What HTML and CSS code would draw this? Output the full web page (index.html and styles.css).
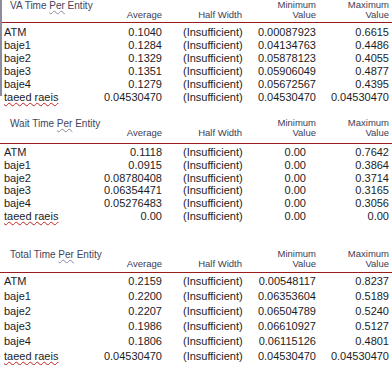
FILE: index.html
```html
<!DOCTYPE html>
<html>
<head>
<meta charset="utf-8">
<link rel="stylesheet" href="styles.css">
</head>
<body>
<section class="report report--va">
  <div class="head">
    <div class="title">VA Time <span class="sq">Per</span> Entity</div>
    <div class="h-avg">Average</div>
    <div class="h-hw">Half Width</div>
    <div class="h-min">Minimum<br>Value</div>
    <div class="h-max">Maximum<br>Value</div>
  </div>
  <div class="rows">
    <div class="row"><span class="lbl">ATM</span><span class="num">0.1040</span><span class="hw">(Insufficient)</span><span class="num">0.00087923</span><span class="num">0.6615</span></div>
    <div class="row"><span class="lbl">baje1</span><span class="num">0.1284</span><span class="hw">(Insufficient)</span><span class="num">0.04134763</span><span class="num">0.4486</span></div>
    <div class="row"><span class="lbl">baje2</span><span class="num">0.1329</span><span class="hw">(Insufficient)</span><span class="num">0.05878123</span><span class="num">0.4055</span></div>
    <div class="row"><span class="lbl">baje3</span><span class="num">0.1351</span><span class="hw">(Insufficient)</span><span class="num">0.05906049</span><span class="num">0.4877</span></div>
    <div class="row"><span class="lbl">baje4</span><span class="num">0.1279</span><span class="hw">(Insufficient)</span><span class="num">0.05672567</span><span class="num">0.4395</span></div>
    <div class="row"><span class="lbl"><span class="spell">taeed raeis</span></span><span class="num">0.04530470</span><span class="hw">(Insufficient)</span><span class="num">0.04530470</span><span class="num">0.04530470</span></div>
  </div>
</section>

<section class="report report--wait">
  <div class="head">
    <div class="title">Wait Time <span class="sq">Per</span> Entity</div>
    <div class="h-avg">Average</div>
    <div class="h-hw">Half Width</div>
    <div class="h-min">Minimum<br>Value</div>
    <div class="h-max">Maximum<br>Value</div>
  </div>
  <div class="rows">
    <div class="row"><span class="lbl">ATM</span><span class="num">0.1118</span><span class="hw">(Insufficient)</span><span class="num short">0.00</span><span class="num">0.7642</span></div>
    <div class="row"><span class="lbl">baje1</span><span class="num">0.0915</span><span class="hw">(Insufficient)</span><span class="num short">0.00</span><span class="num">0.3864</span></div>
    <div class="row"><span class="lbl">baje2</span><span class="num">0.08780408</span><span class="hw">(Insufficient)</span><span class="num short">0.00</span><span class="num">0.3714</span></div>
    <div class="row"><span class="lbl">baje3</span><span class="num">0.06354471</span><span class="hw">(Insufficient)</span><span class="num short">0.00</span><span class="num">0.3165</span></div>
    <div class="row"><span class="lbl">baje4</span><span class="num">0.05276483</span><span class="hw">(Insufficient)</span><span class="num short">0.00</span><span class="num">0.3056</span></div>
    <div class="row"><span class="lbl"><span class="spell">taeed raeis</span></span><span class="num">0.00</span><span class="hw">(Insufficient)</span><span class="num short">0.00</span><span class="num">0.00</span></div>
  </div>
</section>

<section class="report report--total">
  <div class="head">
    <div class="title">Total Time <span class="sq">Per</span> Entity</div>
    <div class="h-avg">Average</div>
    <div class="h-hw">Half Width</div>
    <div class="h-min">Minimum<br>Value</div>
    <div class="h-max">Maximum<br>Value</div>
  </div>
  <div class="rows">
    <div class="row"><span class="lbl">ATM</span><span class="num">0.2159</span><span class="hw">(Insufficient)</span><span class="num">0.00548117</span><span class="num">0.8237</span></div>
    <div class="row"><span class="lbl">baje1</span><span class="num">0.2200</span><span class="hw">(Insufficient)</span><span class="num">0.06353604</span><span class="num">0.5189</span></div>
    <div class="row"><span class="lbl">baje2</span><span class="num">0.2207</span><span class="hw">(Insufficient)</span><span class="num">0.06504789</span><span class="num">0.5240</span></div>
    <div class="row"><span class="lbl">baje3</span><span class="num">0.1986</span><span class="hw">(Insufficient)</span><span class="num">0.06610927</span><span class="num">0.5127</span></div>
    <div class="row"><span class="lbl">baje4</span><span class="num">0.1806</span><span class="hw">(Insufficient)</span><span class="num">0.06115126</span><span class="num">0.4801</span></div>
    <div class="row"><span class="lbl"><span class="spell">taeed raeis</span></span><span class="num">0.04530470</span><span class="hw">(Insufficient)</span><span class="num">0.04530470</span><span class="num">0.04530470</span></div>
  </div>
</section>
</body>
</html>
```
FILE: styles.css
```css
html, body {
  margin: 0;
  padding: 0;
  background: #ffffff;
}
body {
  width: 392px;
  height: 365px;
  overflow: hidden;
  font-family: "Liberation Sans", Arial, sans-serif;
  color: #1c1c26;
}
.report {
  display: block;
}
.head,
.row {
  display: grid;
  grid-template-columns: 96px 62px 80px 74px 73px;
  padding-left: 4px;
}
.head {
  grid-template-rows: 10px 10px;
  border-bottom: 1px solid #9a1c1c;
  font-size: 9.5px;
  line-height: 10px;
  color: #3c3c54;
}
.title {
  grid-row: 1;
  grid-column: 1 / 3;
  padding-left: 6px;
  padding-top: 1px;
  font-size: 10px;
  color: #44445c;
  white-space: nowrap;
}
.h-avg {
  grid-row: 2;
  grid-column: 2;
  text-align: right;
}
.h-hw {
  grid-row: 2;
  grid-column: 3;
  text-align: right;
}
.h-min {
  grid-row: 1 / 3;
  grid-column: 4;
  text-align: right;
}
.h-max {
  grid-row: 1 / 3;
  grid-column: 5;
  text-align: right;
}
.sq {
  text-decoration: underline wavy #8a8aa0;
  text-decoration-thickness: 1px;
  text-underline-offset: 1px;
}
.spell {
  text-decoration: underline wavy #c42020;
  text-decoration-thickness: 1px;
  text-underline-offset: 1px;
}
.rows {
  font-size: 11px;
}
.row {
  height: 13px;
  line-height: 13px;
  white-space: nowrap;
}
.num {
  text-align: right;
}
.num.short {
  padding-right: 10px;
}
.hw {
  padding-left: 21px;
}

/* VA section */
.report--va {
  position: relative;
}
.report--va::before {
  content: "";
  position: absolute;
  left: 0;
  top: 0;
  width: 2px;
  height: 96px;
  background: #8c8c9c;
}
.report--va .head {
  padding-bottom: 2px;
}
.report--va .rows {
  padding-top: 3px;
}

/* Wait section */
.report--wait {
  margin-top: 14px;
}
.report--wait .head {
  padding-bottom: 5px;
}
.report--wait .rows {
  padding-top: 2px;
}
.report--wait .row {
  height: 12.8px;
  line-height: 12.8px;
}

/* Total section */
.report--total {
  margin-top: 26px;
}
.report--total .head {
  padding-bottom: 3px;
}
.report--total .rows {
  padding-top: 1px;
}
.report--total .row {
  height: 15px;
  line-height: 15px;
}
```
